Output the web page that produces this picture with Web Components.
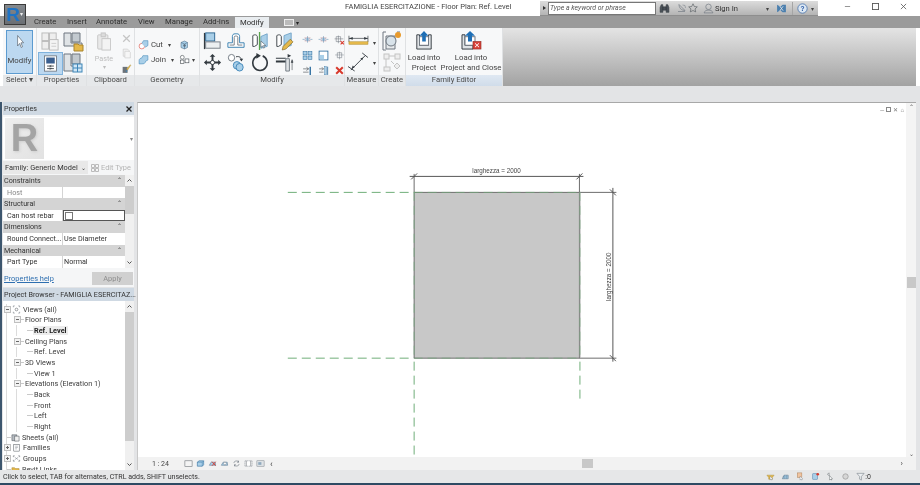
<!DOCTYPE html>
<html>
<head>
<meta charset="utf-8">
<title>Revit</title>
<style>
html, body { margin: 0; height: 100%; overflow: hidden; background: #e3e4e6; }
body { font: 8px Roboto, "Open Sans", sans-serif; color: #3a3a3a; }
</style>
</head>
<body>
<revit-app></revit-app>

<script>
const G = '#6f7780', B = '#3f86b8', LB = '#a9cfe8', D = '#333a40', Y = '#e4b84a', R = '#d8392c';
const ICONS = {
    arrow: `<path d="M6 2v14l3.500-3.500 2.500 5.500 2.200-1-2.500-5.300H16z" fill="#fff" stroke="#56616b"/>`,
    family: `<g fill="#eee" stroke="#bbb"><rect x="1" y="1" width="7" height="8"/><rect x="9" y="1" width="7" height="8"/><rect x="1" y="10" width="7" height="8"/><rect x="9" y="8" width="9" height="11" fill="#f4f4f4"/></g><path d="M11 12h5M11 15h5" stroke="#ccc"/>`,
    folder: `<path d="M1 1h7v10h11v3H1z" fill="#dfe3e6" stroke="${G}"/><path d="M9 1h8v9H9z" fill="#c2c9cf" stroke="${G}"/><path d="M11 12h4l1 1h4v6h-9z" fill="${Y}" stroke="#a9842c"/>`,
    typeprops: `<rect x="3" y="1" width="14" height="18" fill="#fff" stroke="${G}"/><rect x="5" y="3" width="10" height="7" fill="#3a5f8f"/><path d="M6 13h8M6 16h8" stroke="${D}"/><path d="M11 12l-2 1 2 1M9 15l2 1-2 1" fill="none" stroke="${D}" stroke-width=".7"/>`,
    grid: `<path d="M1 1h7v12h10v5H1z" fill="#dfe3e6" stroke="${G}"/><path d="M9 1h8v10H9z" fill="#c2c9cf" stroke="${G}"/><rect x="10" y="11" width="9" height="8" fill="#cfe6f6" stroke="${B}"/><path d="M14.500 11v8M10 15h9" stroke="${B}"/>`,
    paste: `<rect x="2" y="3" width="12" height="15" rx="1" fill="#e9e9e9" stroke="#c5c5c5"/><rect x="6" y="1" width="5" height="4" fill="#dcdcdc" stroke="#c5c5c5"/><rect x="7" y="7" width="10" height="12" fill="#f3f3f3" stroke="#c5c5c5"/>`,
    cutx: `<path d="M4 4l12 12M16 4L4 16" stroke="#c4c4c4" stroke-width="2.200"/>`,
    copy: `<path d="M4 2h8l3 3v10H4z" fill="#f2f2f2" stroke="#c4c4c4"/><path d="M7 6h8l2 2v10H7z" fill="#f6f6f6" stroke="#c4c4c4"/>`,
    brush: `<rect x="3" y="7" width="9" height="11" fill="#6c7379"/><path d="M10 11l7-8 1 1-6 9z" fill="${Y}" stroke="#8a7330" stroke-width=".5"/><path d="M8 14l4-1-2 4z" fill="${B}"/>`,
    cut: `<circle cx="7" cy="13" r="5" fill="#fff" stroke="${R}"/><path d="M7 8l3-5h8v9l-5 3" fill="${LB}" stroke="${B}"/>`,
    join: `<path d="M2 12c0-4 3-4 5-5l2-4h9v8l-4 2c-1 4-3 5-7 5H2z" fill="${LB}" stroke="${B}"/>`,
    cube: `<path d="M4 5l7-3 6 3v10l-6 3-7-3z" fill="${LB}" stroke="#40607c"/><path d="M4 5l7 3 6-3M11 8v10" fill="none" stroke="#40607c"/><circle cx="11" cy="11" r="2.500" fill="#5c6f80"/>`,
    split: `<circle cx="6" cy="6" r="3.500" fill="#fff" stroke="${D}"/><rect x="3" y="11" width="6" height="6" fill="#fff" stroke="${D}"/><rect x="11" y="9" width="7" height="7" fill="#fff" stroke="${D}"/>`,
    align: `<rect x="1" y="1" width="1.500" height="18" fill="${D}"/><rect x="3" y="1" width="10" height="9" fill="${LB}" stroke="#27618e"/><rect x="3" y="11" width="16" height="7" fill="#eceff1" stroke="${G}"/>`,
    offset: `<path d="M1 17v-5h5V5c0-2 1-3 3-3h2c2 0 3 1 3 3v7h5v5z" fill="#fff" stroke="#2f79ad"/><path d="M3 14.500h5V6c0-1 .5-1.500 1.500-1.500h1c1 0 1.500.5 1.500 1.500v8.500h5" fill="none" stroke="${G}"/>`,
    mirrorp: `<path d="M2 4c3-2 5 0 5 1v9l-3 2H2z" fill="#fff" stroke="${D}"/><path d="M11 5l7-3v14l-7 2z" fill="${LB}" stroke="#6fa3c7"/><path d="M9.500 0v20" stroke="#58a34d" stroke-width="1.500"/><path d="M11 10v7l2-1.500 1 2.500 1-.5-1-2.500h2.500z" fill="#fff" stroke="#56616b" stroke-width=".7"/>`,
    mirrord: `<path d="M2 4c3-2 5 0 5 1v9l-3 2H2z" fill="#fff" stroke="${D}"/><path d="M10 4l8-3v14l-8 2z" fill="${LB}" stroke="#6fa3c7"/><path d="M8 20l1-4 8-8 3 3-8 8z" fill="${Y}" stroke="#7d6420" stroke-width=".7"/>`,
    move: `<path d="M10 1l3 3h-2v5h5V7l3 3-3 3v-2h-5v5h2l-3 3-3-3h2v-5H4v2l-3-3 3-3v2h5V4H7z" fill="${D}"/><circle cx="10" cy="10" r="2.200" fill="#fff" stroke="${D}"/>`,
    copyo: `<circle cx="5" cy="5" r="3.500" fill="#fff" stroke="${G}"/><path d="M10 4c4-1 6 1 6 4" fill="none" stroke="${D}"/><path d="M14 6l2 3 2-3z" fill="${D}"/><circle cx="11" cy="13" r="4" fill="${LB}" stroke="${B}"/><circle cx="14" cy="15" r="4" fill="${LB}" stroke="${B}"/>`,
    rotate: `<path d="M7 3a8 8 0 1 0 6 0" fill="none" stroke="${D}" stroke-width="1.800"/><path d="M6 0l5 3-5 3z" fill="${D}"/>`,
    trim: `<path d="M1 5h11v1H1zM1 8h13v2H1z" fill="${D}"/><path d="M12 6h4v13h-4z" fill="#dfe3e6" stroke="${G}"/><path d="M14 1l4 2-4 2z" fill="${D}"/><path d="M19 7l1 3h-2zM19 10v8" fill="${D}" stroke="${D}" stroke-width=".6"/>`,
    oval: `<path d="M1 8h4M15 8h4" stroke="#5e8db0"/><path d="M5 5h10l-2 3 2 3H5l2-3z" fill="${LB}" stroke="#d08a8a" stroke-width=".7"/><path d="M10 2v12" stroke="#5e8db0"/>`,
    grid4: `<g fill="${LB}" stroke="#2d6d9f"><rect x="2" y="3" width="7" height="6"/><rect x="11" y="3" width="7" height="6"/><rect x="2" y="11" width="7" height="6"/><rect x="11" y="11" width="7" height="6"/></g>`,
    scale: `<rect x="2" y="2" width="16" height="16" fill="#fff" stroke="#2d6d9f" stroke-width="1.500"/><rect x="3" y="9" width="8" height="8" fill="${LB}"/>`,
    unpin: `<path d="M4 3h8v9H4z" fill="none" stroke="${G}"/><path d="M1 7h16M8 1v14" stroke="${G}"/><path d="M12 11l6 6M18 11l-6 6" stroke="${R}" stroke-width="2"/>`,
    pin: `<path d="M6 5h8v9H6z" fill="none" stroke="${G}"/><path d="M2 9h16M10 3v14" stroke="${G}" stroke-width=".8"/>`,
    del: `<path d="M4 4l12 12M16 4L4 16" stroke="${R}" stroke-width="3.600"/>`,
    arr1: `<path d="M2 7h10M8 4l4 3-4 3M2 13h10" fill="none" stroke="${D}"/><path d="M15 3v15" stroke="#2d6d9f" stroke-width="2.500"/>`,
    arr2: `<path d="M2 7h8M7 4l3 3-3 3M2 13h8" fill="none" stroke="${D}"/><rect x="12" y="3" width="3" height="15" fill="${LB}" stroke="#2d6d9f" stroke-width=".7"/><path d="M17.500 3v15" stroke="#2d6d9f" stroke-width="1.500"/>`,
    dim: `<path d="M1 1v8M21 1v8M1 4.500h20" stroke="${D}" fill="none" stroke-width=".8"/><path d="M1 4.500l4-1.800v3.600zM21 4.500l-4-1.800v3.600z" fill="${D}"/><rect x="1" y="9" width="20" height="3.500" fill="${Y}" stroke="#b08c2e" stroke-width=".6"/>`,
    measure: `<path d="M3 19L18 3" stroke="${D}"/><path d="M0 15l7 5M15 0l6 5" stroke="${D}"/><path d="M4 17l3-1-2-2zM16 5l-3 1 2 2z" fill="${D}"/>`,
    component: `<path d="M4 1H1v18h3M15 1h3" fill="none" stroke="${G}"/><path d="M4 5h9v13H4z" fill="#e7eaec" stroke="${G}"/><circle cx="9" cy="10" r="5" fill="#d9e3ea" stroke="${G}"/><circle cx="16" cy="4" r="3" fill="#e89a2c"/>`,
    comp2: `<g fill="#eee" stroke="#c4c4c4"><rect x="2" y="1" width="5" height="5"/><rect x="13" y="1" width="5" height="5"/><rect x="2" y="14" width="6" height="4"/><path d="M15 10l3 3-3 3-3-3z"/></g><path d="M7 3h6M4 6v8M9 8l3 3" stroke="#c4c4c4"/>`,
    load: `<path d="M2 4h3v11h10V4h3v15H2z" fill="#dfe3e6" stroke="${D}"/><rect x="5" y="6" width="10" height="9" fill="#fff" stroke="${G}"/><path d="M10 0l5 5h-3v6H8V5H5z" fill="#1f6fb5"/>`,
    loadclose: `<path d="M1 4h3v11h8v4H1z" fill="#dfe3e6" stroke="${D}"/><rect x="4" y="6" width="10" height="9" fill="#fff" stroke="${G}"/><path d="M9 0l5 5h-3v6H7V5H4z" fill="#1f6fb5"/><rect x="12" y="11" width="8" height="8" fill="#d8433a" stroke="#8f2720" stroke-width=".6"/><path d="M14 13l4 4M18 13l-4 4" stroke="#fff"/>`,
    binoc: `<path d="M2 17V8l2-5h3v14zM18 17V8l-2-5h-3v14zM7 7h6v6H7z" fill="#4a5058" stroke="${D}"/>`,
    sat: `<path d="M4 3c0 7 5 12 12 12M4 3l12 12M2 17h14" fill="none" stroke="${G}" stroke-width="1.300"/><path d="M11 4l5 1 1 5" fill="none" stroke="${G}"/>`,
    star: `<path d="M10 1.500l2.600 5.600 6 .7-4.500 4 1.300 6L10 15l-5.400 2.800 1.300-6-4.500-4 6-.7z" fill="none" stroke="#565c62" stroke-width="1.300"/>`,
    user: `<circle cx="10" cy="7" r="5" fill="none" stroke="${G}" stroke-width="1.200"/><path d="M2 18c1-4 4-5 8-5s7 1 8 5z" fill="none" stroke="${G}" stroke-width="1.200"/>`,
    exch: `<path d="M2 3l6 4 4-4h6v14h-6l-4-4-6 4z" fill="#4b7fae"/><path d="M7 6l6 8M13 6l-6 8" stroke="#dfe6ec" stroke-width="1.500"/>`,
    help: `<circle cx="10" cy="10" r="8.500" fill="#dce7f2" stroke="#3868a8" stroke-width="1.300"/><text x="10" y="14.500" text-anchor="middle" font-size="12" font-weight="700" fill="#2456a4" font-family="Liberation Sans">?</text>`,
    vbox: `<rect x="2" y="4" width="16" height="13" fill="#f4f4f4" stroke="#6d7378" stroke-width="1.300"/>`,
    v3d: `<path d="M3 7l4-3h10v9l-3 3H3z" fill="${LB}" stroke="#2d6d9f" stroke-width="1.300"/><path d="M3 7h11v9M14 7l3-3" fill="none" stroke="#2d6d9f"/>`,
    vsun: `<path d="M3 14l4-7h9l1 7z" fill="${LB}" stroke="#40607c"/><path d="M9 6l8 9M17 6l-8 9" stroke="${R}" stroke-width="2"/>`,
    vsh: `<path d="M3 14l4-7h9l1 7z" fill="${LB}" stroke="#40607c"/><circle cx="11" cy="10" r="3" fill="#fff" stroke="${G}"/>`,
    vrot: `<path d="M4 9a6 6 0 0 1 11-2M16 11a6 6 0 0 1-11 2" fill="none" stroke="${G}" stroke-width="1.300"/><path d="M15 3v5h-4zM5 17v-5h4z" fill="${G}"/>`,
    vcrop: `<path d="M2 4h16v12H2z" fill="#fff" stroke="${G}" stroke-dasharray="3 1"/><path d="M5 4v12M15 4v12" stroke="${D}"/>`,
    vcrop2: `<rect x="2" y="4" width="16" height="12" fill="#dfe3e6" stroke="${G}"/><rect x="5" y="7" width="7" height="6" fill="#8fa9bd"/>`,
    sworks: `<path d="M2 7h16l-4 5v4h-8v-4z" fill="${Y}" stroke="#a88c3c"/><path d="M9 9v9l2-2 1.500 2 1-.5-1-2h2.500z" fill="#fff" stroke="#56616b" stroke-width=".7"/>`,
    slink: `<path d="M3 15l4-8h9v8z" fill="${LB}" stroke="#40607c"/><path d="M3 11h13M7 7v8M12 7v8" stroke="#40607c" stroke-width=".6"/>`,
    spin: `<rect x="3" y="2" width="10" height="10" fill="#f0c4a0" stroke="#a87a50"/><path d="M9 9v9l2-2 1.500 2 1-.5-1-2h2.500z" fill="#fff" stroke="#56616b" stroke-width=".7"/>`,
    sface: `<rect x="4" y="4" width="10" height="12" fill="${LB}" stroke="#2d6d9f"/><circle cx="15" cy="5" r="3" fill="${R}"/>`,
    sdrag: `<path d="M3 5l4-3v6zM8 8v10l2-2 1.500 2 1-.5-1-2h3z" fill="#fff" stroke="${D}" stroke-width=".8"/>`,
    scirc: `<circle cx="10" cy="10" r="6" fill="#d6d6d6" stroke="#a7a7a7" stroke-width="2"/>`,
    sfilter: `<path d="M2 3h16l-6 7v8l-4-2v-6z" fill="#eceff1" stroke="${G}" stroke-width="1.200"/>`,
    views: `<path d="M3 5V2h3M17 5V2h-3M3 15v3h3M17 15v3h-3" fill="none" stroke="${G}" stroke-width="1.300"/><circle cx="10" cy="10" r="3" fill="#fff" stroke="${D}"/>`,
    sheets: `<path d="M2 4h11v13H2z" fill="#b6bcc2" stroke="${D}"/><path d="M8 7h10v11H8z" fill="#f0f0f0" stroke="${D}"/>`,
    fam: `<rect x="4" y="3" width="12" height="15" fill="#fff" stroke="${D}"/><path d="M7 7h6M7 10h6M7 13h4" stroke="${G}"/>`,
    groups: `<path d="M3 4h3M3 4v3M17 4h-3M17 4v3M3 16h3M3 16v-3M17 16h-3M17 16v-3" fill="none" stroke="${D}"/><path d="M6 7l8 6M14 7l-8 6" stroke="${G}"/>`,
    links: `<path d="M2 6h6l2 2h8v9H2z" fill="${Y}" stroke="#9c7e2c"/>`
};

function sheet(css) {
    return `<style>${css}</style>`;
}

class RIcon extends HTMLElement {
    constructor() {
        super();
        this.attachShadow({ mode: 'open' });
    }

    connectedCallback() {
        const w = this.getAttribute('w') || 12;
        const h = this.getAttribute('h') || w;
        this.shadowRoot.innerHTML = sheet(`
            :host { display: block; width: ${w}px; height: ${h}px; flex: none; }
            svg { display: block; width: 100%; height: 100%; overflow: visible; }
        `) + `<svg viewBox="0 0 20 20" preserveAspectRatio="none">${ICONS[this.getAttribute('name')] || ''}</svg>`;
    }
}

class TitleBar extends HTMLElement {
    constructor() {
        super();
        this.attachShadow({ mode: 'open' });
    }

    connectedCallback() {
        this.shadowRoot.innerHTML = sheet(`
            :host { display: flex; align-items: flex-start; height: 16px; background: #fff; position: relative; }
            .title { position: absolute; left: 345px; top: 1px; font-size: 7.550px; line-height: 12px; color: #444; white-space: nowrap; }
            .tools {
                margin-left: 540px; width: 278px; height: 15px; margin-top: 1px; box-sizing: border-box; flex: none;
                display: flex; align-items: center; background: linear-gradient(#dcdcdc, #b4b4b4);
                border-bottom: 1px solid #8e8e8e; font-size: 7.600px; color: #333;
            }
            .tools > * { flex: none; }
            .play { width: 0; height: 0; border-left: 3px solid #333; border-top: 2.500px solid transparent; border-bottom: 2.500px solid transparent; margin: 0 3px; }
            .search {
                width: 108px; height: 13px; box-sizing: border-box; margin-left: -1px; background: #fff;
                border: 1px solid #777; font: italic 6.900px Roboto, sans-serif; color: #555; line-height: 11px; padding-left: 1px; white-space: nowrap;
            }
            .sign { margin-left: 1px; width: 50px; }
            .caret { font-size: 6px; margin-left: 1px; color: #444; }
            .sep { width: 1px; height: 13px; background: #a5a5a5; margin-left: 5px; }
            .win { position: absolute; left: 844px; top: 3px; display: flex; gap: 21px; }
            .win svg { width: 7px; height: 7px; display: block; }
        `) + `
            <div class="title">FAMIGLIA ESERCITAZIONE - Floor Plan: Ref. Level</div>
            <div class="tools">
                <div class="play"></div>
                <div class="search">Type a keyword or phrase</div>
                <r-icon name="binoc" w="11" style="margin-left:3px"></r-icon>
                <r-icon name="sat" w="10" style="margin-left:7px"></r-icon>
                <r-icon name="star" w="10" style="margin-left:1px"></r-icon>
                <r-icon name="user" w="11" style="margin-left:5px"></r-icon>
                <div class="sign">Sign In</div>
                <span class="caret">▾</span>
                <r-icon name="exch" w="11" style="margin-left:7px"></r-icon>
                <div class="sep"></div>
                <r-icon name="help" w="11" style="margin-left:4px"></r-icon>
                <span class="caret" style="margin-left:3px">▾</span>
            </div>
            <div class="win">
                <svg viewBox="0 0 8 8"><path d="M1 4h6" stroke="#888" stroke-width="1"/></svg>
                <svg viewBox="0 0 8 8"><rect x=".5" y=".5" width="7" height="7" fill="none" stroke="#555"/></svg>
                <svg viewBox="0 0 8 8"><path d="M1 1l6 6M7 1L1 7" stroke="#555" stroke-width=".9"/></svg>
            </div>
        `;
    }
}

class TabBar extends HTMLElement {
    constructor() {
        super();
        this.attachShadow({ mode: 'open' });
    }

    connectedCallback() {
        const tabs = [['Create', 33], ['Insert', 29], ['Annotate', 42], ['View', 27], ['Manage', 38], ['Add-Ins', 32]];
        const html = tabs.map(t => `<div class="tab" style="width:${t[1]}px">${t[0]}</div>`).join('');
        this.shadowRoot.innerHTML = sheet(`
            :host { display: flex; height: 12px; background: #9b9b9b; padding-left: 34px; align-items: flex-end; font-size: 7.700px; color: #2e2e2e; }
            .tab { height: 12px; line-height: 12px; flex: none; white-space: nowrap; }
            .tab.on { width: 34px; height: 11px; line-height: 11px; padding-left: 5px; box-sizing: border-box; background: #e9edf0; }
            .extra { display: flex; align-items: center; gap: 2px; margin-left: 15px; height: 12px; }
            .extra i { display: block; width: 8px; height: 5px; border: 1px solid #eee; background: #bbb; }
            .extra b { font-size: 6px; font-weight: 400; color: #222; }
        `) + html + `
            <div class="tab on">Modify</div>
            <div class="extra"><i></i><b>▾</b></div>
        `;
    }
}

class RibbonPanel extends HTMLElement {
    constructor() {
        super();
        this.attachShadow({ mode: 'open' });
    }

    connectedCallback() {
        const w = this.getAttribute('w');
        const tint = this.hasAttribute('tint') ? 'background:linear-gradient(#dfe8f2,#d0dcea);' : '';
        this.shadowRoot.innerHTML = sheet(`
            :host { display: flex; flex-direction: column; width: ${w}px; flex: none; box-sizing: border-box; border-right: 1px solid #dfe1e3; }
            .body { flex: 1; min-height: 0; }
            .label { height: 11px; line-height: 10px; text-align: center; background: #e6e8ea; font-size: 7.700px; color: #4a4a4a; white-space: nowrap; ${tint} }
        `) + `<div class="body"><slot></slot></div><div class="label">${this.getAttribute('label')}</div>`;
    }
}

class RibbonBar extends HTMLElement {
    constructor() {
        super();
        this.attachShadow({ mode: 'open' });
    }

    connectedCallback() {
        this.shadowRoot.innerHTML = sheet(`
            :host { display: flex; height: 58px; padding-left: 3px; padding-right: 4px; background: #fff; }
            .panels { display: flex; background: #f7f8f9; flex: none; }
            .fill { flex: 1; background: linear-gradient(#e4e4e4, #a2a2a2); }
            .g { display: grid; box-sizing: border-box; }
            .modbtn {
                margin: 2px 0 0 3px; width: 27px; height: 44px; box-sizing: border-box; background: #bcd8f0; border: 1px solid #5c9bd0;
                display: flex; flex-direction: column; align-items: center; padding-top: 3px; gap: 7px; font-size: 7.800px; color: #444;
            }
            .props { grid-template-columns: 23px 22px; grid-template-rows: 21px 22px; padding: 3px 0 0 2px; justify-items: center; align-items: center; }
            .active { background: #bcd8f0; outline: 1px solid #7fb2dc; width: 23px; height: 21px; display: flex; align-items: center; justify-content: center; }
            .clip { display: flex; padding: 4px 0 0 7px; }
            .paste { display: flex; flex-direction: column; align-items: center; width: 20px; color: #bdbdbd; font-size: 7.200px; line-height: 8px; }
            .paste span:first-of-type { margin-top: 4px; }
            .stack { display: flex; flex-direction: column; gap: 4px; margin: 1px 0 0 7px; }
            .geom { grid-template-columns: 41px 24px; grid-template-rows: 15px 15px; padding: 9px 0 0 3px; align-items: center; font-size: 7.800px; color: #444; }
            .row { display: flex; align-items: center; gap: 2px; white-space: nowrap; }
            .row small { font-size: 6px; color: #444; margin-left: 3px; }
            .mod { display: flex; padding: 4px 0 0 3px; }
            .big { display: grid; grid-template-columns: repeat(4, 18px); grid-template-rows: 19px 19px; column-gap: 6px; row-gap: 2px; }
            .small { display: grid; grid-template-columns: repeat(3, 11px); grid-template-rows: repeat(3, 11px); column-gap: 5px; row-gap: 4px; margin: 3px 0 0 9px; }
            .measure { grid-template-rows: 19px 20px; padding: 5px 0 0 3px; grid-template-columns: 25px 6px; align-items: center; }
            .measure small { font-size: 6px; color: #444; }
            .create { display: flex; flex-direction: column; gap: 2px; padding: 3px 0 0 3px; }
            .fam { display: flex; padding-top: 3px; font-size: 7.800px; line-height: 10px; color: #444; text-align: center; }
            .load { display: flex; flex-direction: column; align-items: center; width: 36px; gap: 3px; white-space: nowrap; }
            .load + .load { margin-left: 4px; width: 50px; }
        `) + `
            <div class="panels">
                <ribbon-panel w="34" label="Select ▾">
                    <div class="modbtn"><r-icon name="arrow" w="12" h="15"></r-icon><span>Modify</span></div>
                </ribbon-panel>
                <ribbon-panel w="50" label="Properties">
                    <div class="g props">
                        <r-icon name="family" w="19"></r-icon>
                        <r-icon name="folder" w="20"></r-icon>
                        <div class="active"><r-icon name="typeprops" w="17"></r-icon></div>
                        <r-icon name="grid" w="20"></r-icon>
                    </div>
                </ribbon-panel>
                <ribbon-panel w="48" label="Clipboard">
                    <div class="clip">
                        <div class="paste"><r-icon name="paste" w="17" h="19"></r-icon><span>Paste</span><span style="font-size:6px">▾</span></div>
                        <div class="stack">
                            <r-icon name="cutx" w="11"></r-icon>
                            <r-icon name="copy" w="11"></r-icon>
                            <r-icon name="brush" w="11"></r-icon>
                        </div>
                    </div>
                </ribbon-panel>
                <ribbon-panel w="65" label="Geometry">
                    <div class="g geom">
                        <div class="row"><r-icon name="cut" w="11"></r-icon>Cut<small>▾</small></div>
                        <r-icon name="cube" w="10"></r-icon>
                        <div class="row"><r-icon name="join" w="11"></r-icon>Join<small>▾</small></div>
                        <div class="row"><r-icon name="split" w="11"></r-icon><small style="margin-left:0">▾</small></div>
                    </div>
                </ribbon-panel>
                <ribbon-panel w="145" label="Modify">
                    <div class="mod">
                        <div class="big">
                            <r-icon name="align" w="18" h="18"></r-icon>
                            <r-icon name="offset" w="18" h="18"></r-icon>
                            <r-icon name="mirrorp" w="18" h="18"></r-icon>
                            <r-icon name="mirrord" w="18" h="18"></r-icon>
                            <r-icon name="move" w="19" h="19"></r-icon>
                            <r-icon name="copyo" w="18" h="19"></r-icon>
                            <r-icon name="rotate" w="18" h="19"></r-icon>
                            <r-icon name="trim" w="18" h="19"></r-icon>
                        </div>
                        <div class="small">
                            <r-icon name="oval" w="11"></r-icon>
                            <r-icon name="oval" w="11"></r-icon>
                            <r-icon name="unpin" w="11"></r-icon>
                            <r-icon name="grid4" w="11"></r-icon>
                            <r-icon name="scale" w="11"></r-icon>
                            <r-icon name="pin" w="11"></r-icon>
                            <r-icon name="arr1" w="11"></r-icon>
                            <r-icon name="arr2" w="11"></r-icon>
                            <r-icon name="del" w="11"></r-icon>
                        </div>
                    </div>
                </ribbon-panel>
                <ribbon-panel w="34" label="Measure">
                    <div class="g measure">
                        <r-icon name="dim" w="19" h="15"></r-icon><small>▾</small>
                        <r-icon name="measure" w="19" h="18"></r-icon><small>▾</small>
                    </div>
                </ribbon-panel>
                <ribbon-panel w="27" label="Create">
                    <div class="create">
                        <r-icon name="component" w="20"></r-icon>
                        <r-icon name="comp2" w="20" h="20"></r-icon>
                    </div>
                </ribbon-panel>
                <ribbon-panel w="97" label="Family Editor" tint>
                    <div class="fam">
                        <div class="load"><r-icon name="load" w="18" h="19"></r-icon><span>Load into<br>Project</span></div>
                        <div class="load"><r-icon name="loadclose" w="20" h="19"></r-icon><span>Load into<br>Project and Close</span></div>
                    </div>
                </ribbon-panel>
            </div>
            <div class="fill"></div>
        `;
    }
}

class PaneHeader extends HTMLElement {
    constructor() {
        super();
        this.attachShadow({ mode: 'open' });
    }

    connectedCallback() {
        this.shadowRoot.innerHTML = sheet(`
            :host { display: flex; align-items: center; justify-content: space-between; height: 13px; background: #cfd9e3; padding: 0 2px 0 1px; font-size: 7.200px; color: #333; white-space: nowrap; flex: none; }
            svg { width: 6px; height: 6px; display: block; }
        `) + `<slot></slot><svg viewBox="0 0 6 6"><path d="M.5.5l5 5M5.500.5l-5 5" stroke="#222" stroke-width="1.300"/></svg>`;
    }
}

class ScrollTrack extends HTMLElement {
    constructor() {
        super();
        this.attachShadow({ mode: 'open' });
    }

    connectedCallback() {
        this.shadowRoot.innerHTML = sheet(`
            :host { display: flex; flex-direction: column; width: 9px; flex: none; background: #f0f0f0; align-items: center; }
            .a { height: 11px; width: 100%; display: flex; align-items: center; justify-content: center; flex: none; }
            .a svg { width: 5px; height: 3px; }
            .t { flex: 1; width: 100%; background: #f0f0f0; }
            .m { width: 100%; background: #cdcdcd; height: ${this.getAttribute('thumb')}; }
        `) + `
            <div class="a"><svg viewBox="0 0 5 3"><path d="M.5 2.500l2-2 2 2" fill="none" stroke="#555"/></svg></div>
            <div class="m"></div><div class="t"></div>
            <div class="a"><svg viewBox="0 0 5 3"><path d="M.5.500l2 2 2-2" fill="none" stroke="#555"/></svg></div>
        `;
    }
}

class PropsPanel extends HTMLElement {
    constructor() {
        super();
        this.attachShadow({ mode: 'open' });
    }

    connectedCallback() {
        const row = (a, b, cls) => `<div class="row ${cls || ''}"><span class="k">${a}</span><span class="v">${b}</span></div>`;
        const sec = a => `<div class="sec">${a}<i>⌃</i></div>`;
        this.shadowRoot.innerHTML = sheet(`
            :host { display: flex; flex-direction: column; height: 185px; background: #f5f6f7; font-size: 7.400px; color: #333; box-sizing: border-box; }
            .thumb { height: 43px; margin-top: 2px; display: flex; background: #fff; align-items: center; flex: none; }
            .logo { width: 39px; height: 41px; margin-left: 2px; background: linear-gradient(135deg, #eee, #e2e2e2); display: flex; align-items: center; justify-content: center; overflow: hidden; }
            .logo span { font: 700 38px/41px "Liberation Sans", sans-serif; color: #a4a4a4; text-shadow: 1px 1px 3px #ccc; }
            .thumb b { margin-left: auto; margin-right: 1px; font-size: 6px; font-weight: 400; color: #888; }
            .fam { display: flex; align-items: center; height: 13px; margin-top: 1px; flex: none; }
            .sel { width: 85px; height: 13px; background: #e8e8e8; line-height: 13px; padding: 0 2px; box-sizing: border-box; white-space: nowrap; display: flex; justify-content: space-between; }
            .sel i { font-style: normal; font-size: 6px; }
            .edit { margin-left: 3px; color: #b4b4b4; display: flex; align-items: center; gap: 2px; white-space: nowrap; }
            .edit svg { width: 8px; height: 8px; }
            .grid { display: flex; height: 93px; margin-top: 1px; flex: none; }
            .tbl { width: 122px; flex: none; overflow: hidden; font-size: 7.200px; }
            .sec { height: 11.600px; line-height: 11.600px; background: #d4d4d4; padding: 0 3px 0 1px; display: flex; justify-content: space-between; }
            .sec i { font-style: normal; font-size: 6px; line-height: 9px; color: #333; }
            .row { display: flex; height: 11.600px; line-height: 11px; background: #fff; box-sizing: border-box; }
            .k { width: 60px; box-sizing: border-box; padding-left: 4px; border-right: 1px solid #d4d4d4; flex: none; white-space: nowrap; }
            .v { flex: 1; padding-left: 1px; white-space: nowrap; }
            .dim .k { color: #888; }
            .chk .v { border: 1px solid #555; box-sizing: border-box; display: flex; align-items: center; padding-left: 1px; }
            .chk .v i { display: block; width: 6px; height: 6px; border: 1px solid #777; background: #fff; }
            .foot { display: flex; align-items: center; justify-content: space-between; height: 14px; margin-top: 3px; padding: 0 1px; flex: none; }
            .foot a { color: #2e6fb0; text-decoration: underline; }
            .apply { width: 41px; height: 13px; background: #d0d0d0; color: #8d8d8d; text-align: center; line-height: 13px; }
        `) + `
            <pane-header>Properties</pane-header>
            <div class="thumb"><div class="logo"><span>R</span></div><b>▾</b></div>
            <div class="fam">
                <div class="sel"><span>Family: Generic Model</span><i>⌄</i></div>
                <div class="edit"><svg viewBox="0 0 8 8"><path d="M.5.5h3v3h-3zM4.500.5h3v3h-3zM.5 4.500h3v3h-3zM4.500 4.500h3v3h-3z" fill="none" stroke="#bbb"/></svg>Edit Type</div>
            </div>
            <div class="grid">
                <div class="tbl">
                    ${sec('Constraints')}${row('Host', '', 'dim')}
                    ${sec('Structural')}<div class="row chk"><span class="k">Can host rebar</span><span class="v"><i></i></span></div>
                    ${sec('Dimensions')}${row('Round Connect...', 'Use Diameter')}
                    ${sec('Mechanical')}${row('Part Type', 'Normal')}
                </div>
                <scroll-track thumb="28px"></scroll-track>
            </div>
            <div class="foot"><a>Properties help</a><div class="apply">Apply</div></div>
        `;
    }
}

class TreeRow extends HTMLElement {
    constructor() {
        super();
        this.attachShadow({ mode: 'open' });
    }

    connectedCallback() {
        const depth = +this.getAttribute('depth');
        const exp = this.getAttribute('exp');
        const icon = this.getAttribute('icon');
        const on = this.hasAttribute('on');
        const box = exp ? `<span class="box">${exp === '-' ? '<u></u>' : '<u></u><s></s>'}</span>` : '';
        const guides = ['linear-gradient(#dcdcdc, #dcdcdc) no-repeat 3px 0 / 1px 100%'];
        if (depth === 2) guides.push('linear-gradient(#dcdcdc, #dcdcdc) no-repeat 13px 0 / 1px 100%');
        // short connector after the expander of a branch, longer stub before a leaf
        const stub = exp ? (depth === 1 ? '<span class="dash"></span>' : '') : '<span class="dash"></span>';
        const stubCss = exp
            ? 'width: 3px; margin-right: 1px;'
            : `width: ${depth === 2 ? 6 : 4}px; margin-left: 3px; margin-right: ${depth === 2 ? 1 : 0}px;`;
        this.shadowRoot.innerHTML = sheet(`
            :host {
                display: flex; align-items: center; height: 10.670px; flex: none; padding-left: ${[1, 11, 21][depth]}px;
                white-space: nowrap; font-size: 7.300px; color: #3c3c3c;
                background: ${guides.join(', ')};
            }
            .box { width: 5px; height: 5px; border: 1px solid #c0c0c0; position: relative; flex: none; margin-right: ${depth === 0 ? 1 : 0}px; background: #f3f3f3; }
            .box u { position: absolute; left: 1px; right: 1px; top: 2px; height: 1px; background: #666; }
            .box s { position: absolute; top: 1px; bottom: 1px; left: 2px; width: 1px; background: #666; }
            .dash { border-top: 1px solid #c9c9c9; flex: none; ${stubCss} }
            r-icon { margin-right: 2px; }
            .t { ${on ? 'font-weight: 700; background: #ececec; padding: 0 1px; margin-left: -1px; color: #222;' : ''} }
        `) + `${box}${stub}${icon ? `<r-icon name="${icon}" w="9"></r-icon>` : ''}<span class="t"><slot></slot></span>`;
    }
}

class BrowserPanel extends HTMLElement {
    constructor() {
        super();
        this.attachShadow({ mode: 'open' });
    }

    connectedCallback() {
        this.shadowRoot.innerHTML = sheet(`
            :host { display: flex; flex-direction: column; flex: 1; min-height: 0; background: #fff; margin-top: 1px; }
            .body { display: flex; flex: 1; min-height: 0; overflow: hidden; }
            .tree { flex: 1; padding-top: 3px; overflow: hidden; display: flex; flex-direction: column; }
        `) + `
            <pane-header>Project Browser - FAMIGLIA ESERCITAZ...</pane-header>
            <div class="body">
                <div class="tree">
                    <tree-row depth="0" exp="-" icon="views">Views (all)</tree-row>
                    <tree-row depth="1" exp="-">Floor Plans</tree-row>
                    <tree-row depth="2" on>Ref. Level</tree-row>
                    <tree-row depth="1" exp="-">Ceiling Plans</tree-row>
                    <tree-row depth="2">Ref. Level</tree-row>
                    <tree-row depth="1" exp="-">3D Views</tree-row>
                    <tree-row depth="2">View 1</tree-row>
                    <tree-row depth="1" exp="-">Elevations (Elevation 1)</tree-row>
                    <tree-row depth="2">Back</tree-row>
                    <tree-row depth="2">Front</tree-row>
                    <tree-row depth="2">Left</tree-row>
                    <tree-row depth="2">Right</tree-row>
                    <tree-row depth="0" exp="" icon="sheets">Sheets (all)</tree-row>
                    <tree-row depth="0" exp="+" icon="fam">Families</tree-row>
                    <tree-row depth="0" exp="+" icon="groups">Groups</tree-row>
                    <tree-row depth="0" exp="" icon="links">Revit Links</tree-row>
                </div>
                <scroll-track thumb="129px"></scroll-track>
            </div>
        `;
    }
}

class ViewCanvas extends HTMLElement {
    constructor() {
        super();
        this.attachShadow({ mode: 'open' });
    }

    connectedCallback() {
        const green = '#6fae78';
        this.shadowRoot.innerHTML = sheet(`
            :host { display: flex; flex-direction: column; flex: 1; min-width: 0; background: #fff; margin-left: 3px; box-sizing: border-box; border-top: 1px solid #a8a8a8; border-left: 1px solid #c8c8c8; position: relative; }
            .mid { flex: 1; min-height: 0; display: flex; }
            svg.draw { flex: 1; min-width: 0; display: block; }
            .rs { width: 10px; flex: none; background: #f4f4f4; display: flex; flex-direction: column; justify-content: space-between; align-items: center; position: relative; }
            .rs i { display: block; position: absolute; left: 1px; right: 0; top: 174px; height: 11px; background: #c8c8c8; }
            .rs b { font-size: 6px; font-weight: 400; color: #555; }
            .bar { height: 13px; flex: none; display: flex; align-items: center; background: #f2f2f2; font-size: 7px; color: #444; position: relative; }
            .scale { margin-left: 14px; width: 32px; white-space: nowrap; }
            .bar r-icon { margin-right: 3px; }
            .thumb { position: absolute; left: 444px; top: 2px; width: 11px; height: 9px; background: #c8c8c8; }
            .end { margin-left: auto; margin-right: 13px; font-size: 8px; color: #444; }
            .mini { position: absolute; right: 12px; top: 4px; display: flex; gap: 2px; font-size: 6px; line-height: 6px; color: #777; }
            .mini i { display: block; width: 5px; height: 5px; border: 1px solid #888; box-sizing: border-box; }
            text { font: 6.300px "Liberation Sans", sans-serif; fill: #444; }
        `) + `
            <div class="mid">
                <svg class="draw" viewBox="138 103 769 354" preserveAspectRatio="xMinYMin meet">
                    <rect x="414.500" y="192.500" width="165.500" height="166" fill="#c8c8c8"/>
                    <path d="M414.500 174V358.500M580 174V358.500M414.500 192.500H617M414.500 358.500H617" fill="none" stroke="#6c6c6c" stroke-width="1"/>
                    <path d="M580.500 192v166" stroke="#999" stroke-width="1"/>
                    <path d="M410 176.500H584M613.500 188V362" fill="none" stroke="#555"/>
                    <path d="M411.500 179.500l6-6M577 179.500l6-6M610.500 189.500l6 6M610.500 355.500l6 6" stroke="#555"/>
                    <g fill="none" stroke="${green}" stroke-width="1" stroke-dasharray="9 5">
                        <path d="M288 192.500H414M288 358.500H414M414.500 362V458M580.500 362V402"/>
                        <path d="M414 192.500H580M414 358.500H580M414.500 192V358M580.500 192V358" stroke-opacity=".6"/>
                    </g>
                    <text x="497" y="173" text-anchor="middle">larghezza = 2000</text>
                    <text transform="translate(611.500 277) rotate(-90)" text-anchor="middle">larghezza = 2000</text>
                </svg>
                <div class="rs"><b>⌃</b><i></i><b>⌄</b></div>
            </div>
            <div class="bar">
                <span class="scale">1 : 24</span>
                <r-icon name="vbox" w="9"></r-icon><r-icon name="v3d" w="9"></r-icon><r-icon name="vsun" w="9"></r-icon><r-icon name="vsh" w="9"></r-icon><r-icon name="vrot" w="9"></r-icon><r-icon name="vcrop" w="9"></r-icon><r-icon name="vcrop2" w="9"></r-icon>
                <span style="font-size:9px;margin-left:2px">‹</span>
                <div class="thumb"></div>
                <span class="end">›</span>
            </div>
            <div class="mini"><span>—</span><i></i><span>✕</span><span>⌂</span></div>
        `;
    }
}

class StatusBar extends HTMLElement {
    constructor() {
        super();
        this.attachShadow({ mode: 'open' });
    }

    connectedCallback() {
        this.shadowRoot.innerHTML = sheet(`
            :host { display: flex; align-items: center; height: 13px; background: #e6e7e8; padding-left: 3px; border-bottom: 2px solid #2e4a63; font-size: 7.050px; color: #333; white-space: nowrap; }
            .icons { margin-left: auto; margin-right: 49px; display: flex; align-items: center; gap: 6px; }
            .zero { margin-left: -6px; font-size: 7px; }
        `) + `
            <span>Click to select, TAB for alternates, CTRL adds, SHIFT unselects.</span>
            <div class="icons">
                <r-icon name="sworks" w="9"></r-icon><r-icon name="slink" w="9"></r-icon><r-icon name="spin" w="9"></r-icon><r-icon name="sface" w="9"></r-icon><r-icon name="sdrag" w="9"></r-icon><r-icon name="scirc" w="9"></r-icon><r-icon name="sfilter" w="9"></r-icon><span class="zero">:0</span>
            </div>
        `;
    }
}

class RevitApp extends HTMLElement {
    constructor() {
        super();
        this.attachShadow({ mode: 'open' });
    }

    connectedCallback() {
        this.shadowRoot.innerHTML = sheet(`
            :host { display: flex; flex-direction: column; height: 485px; width: 920px; position: relative; background: #e3e4e6; filter: blur(.3px); }
            .opts { height: 16px; flex: none; background: #e3e4e6; }
            .main { display: flex; flex: 1; min-height: 0; padding-right: 4px; border-left: 2px solid #3d566e; background: #e3e4e6; }
            .left { width: 131px; margin-left: 1px; flex: none; display: flex; flex-direction: column; min-height: 0; }
            .r {
                position: absolute; left: 4px; top: 4px; width: 22px; height: 21px; box-sizing: border-box; padding-right: 1px;
                background: linear-gradient(#84898e, #6a6e73); border: 1px solid #3a3a3a; display: flex; align-items: center; justify-content: center;
                font: 700 19px/19px "Liberation Sans", sans-serif; color: #1f73c4;
            }
            .r small { font-size: 6px; color: #eee; font-weight: 400; }
        `) + `
            <title-bar></title-bar>
            <tab-bar></tab-bar>
            <ribbon-bar></ribbon-bar>
            <div class="opts"></div>
            <div class="main">
                <div class="left">
                    <props-panel></props-panel>
                    <browser-panel></browser-panel>
                </div>
                <view-canvas></view-canvas>
            </div>
            <status-bar></status-bar>
            <div class="r">R<small>▾</small></div>
        `;
    }
}

customElements.define('r-icon', RIcon);
customElements.define('title-bar', TitleBar);
customElements.define('tab-bar', TabBar);
customElements.define('ribbon-panel', RibbonPanel);
customElements.define('ribbon-bar', RibbonBar);
customElements.define('pane-header', PaneHeader);
customElements.define('scroll-track', ScrollTrack);
customElements.define('props-panel', PropsPanel);
customElements.define('tree-row', TreeRow);
customElements.define('browser-panel', BrowserPanel);
customElements.define('view-canvas', ViewCanvas);
customElements.define('status-bar', StatusBar);
customElements.define('revit-app', RevitApp);
</script>
</body>
</html>
